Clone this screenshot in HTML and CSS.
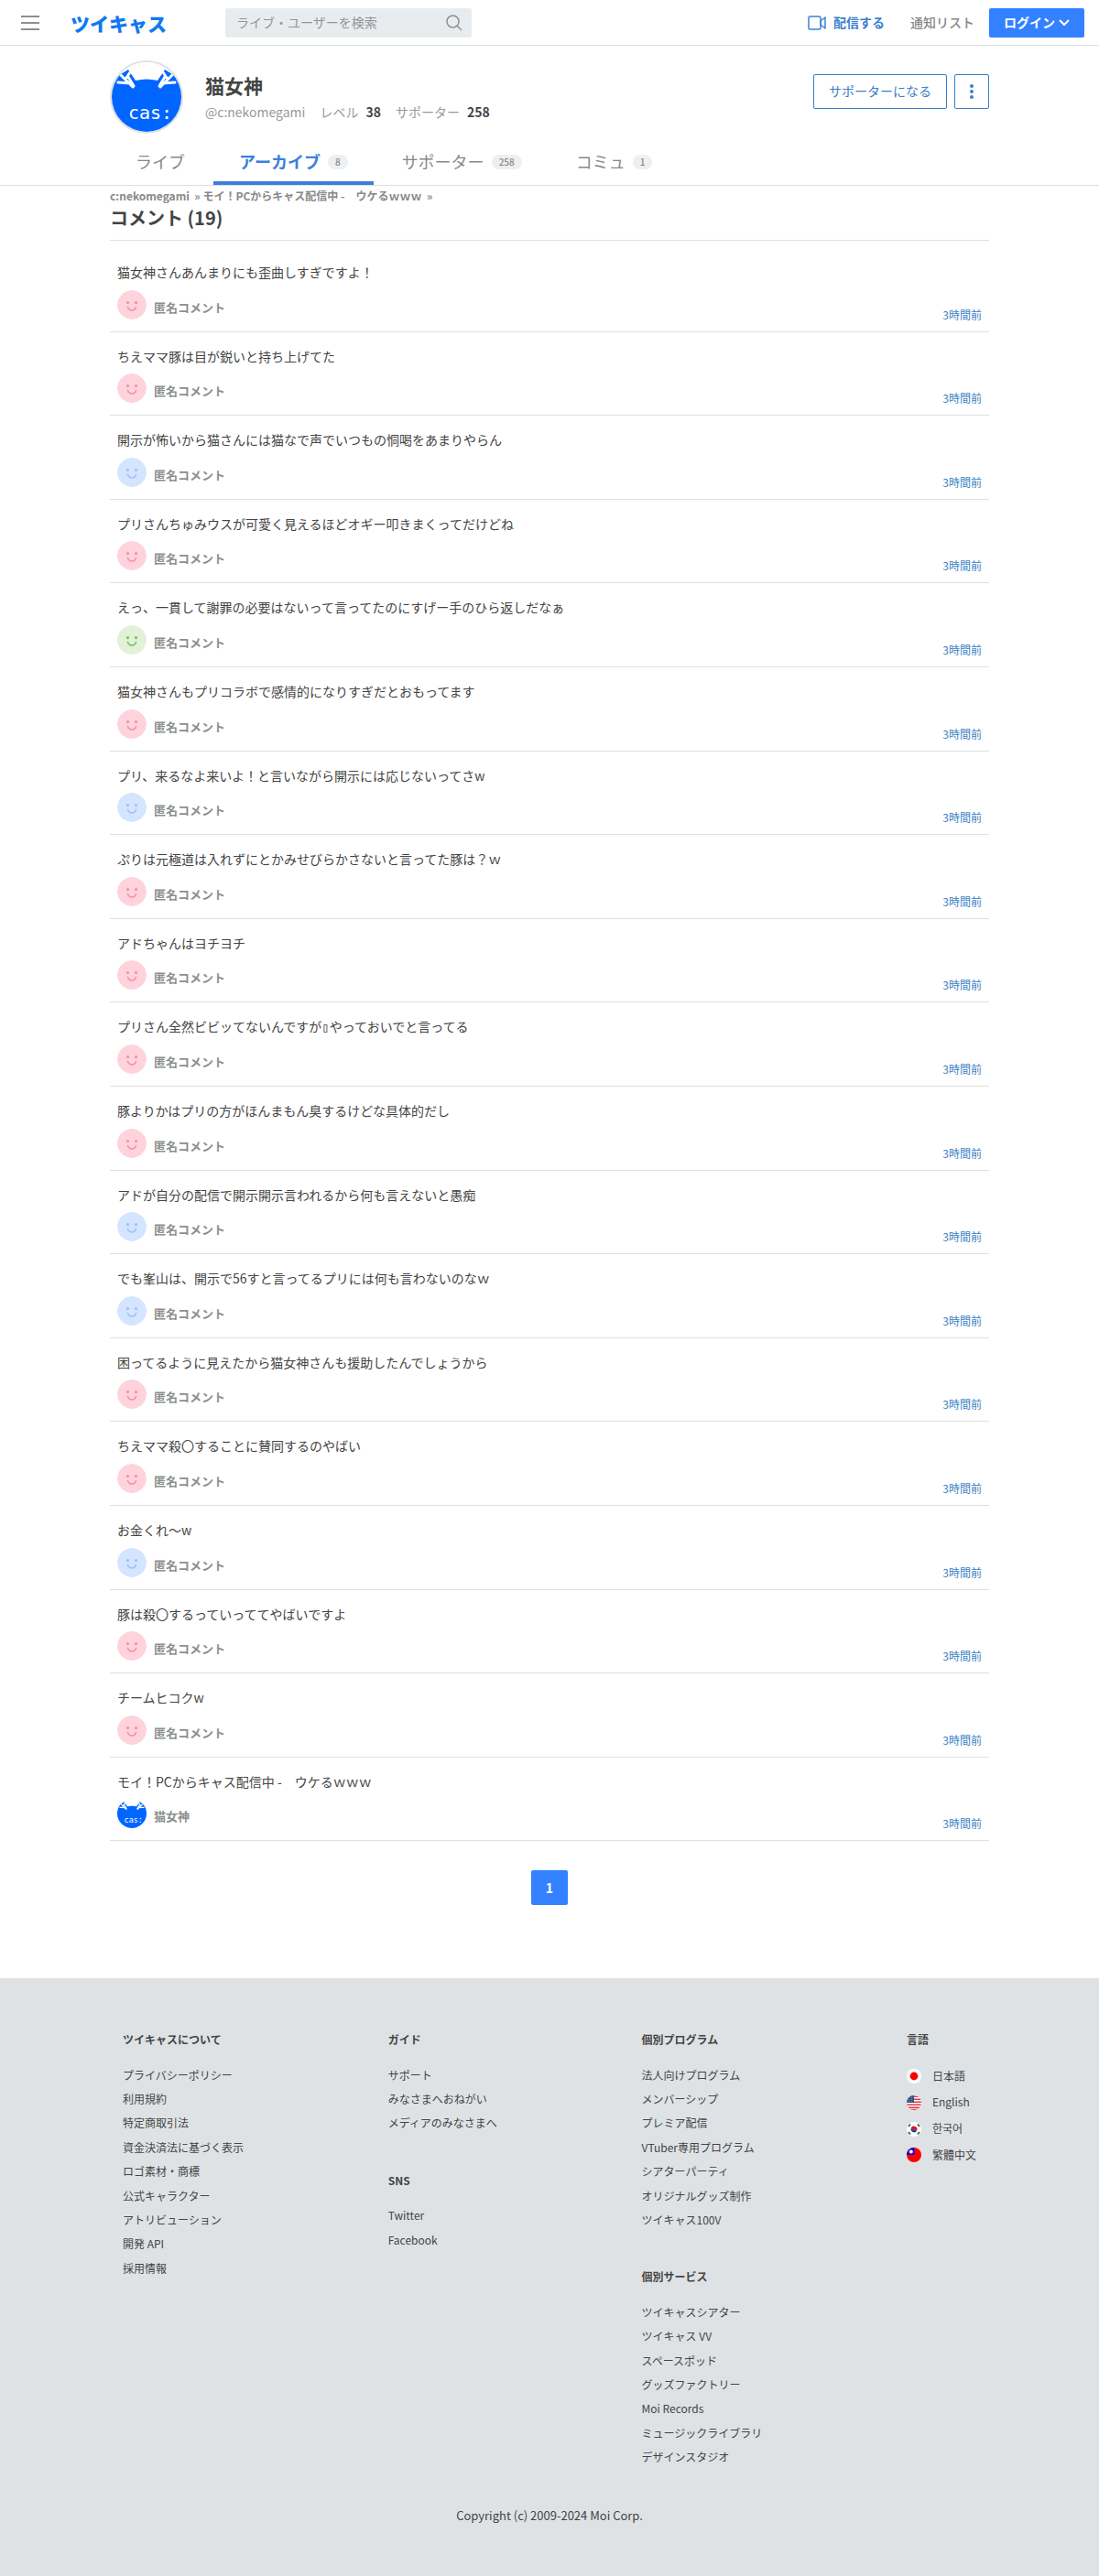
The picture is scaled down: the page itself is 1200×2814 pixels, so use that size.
FILE: index.html
```html
<!DOCTYPE html>
<html lang="ja">
<head>
<meta charset="utf-8">
<meta name="viewport" content="width=device-width, initial-scale=1">
<title>コメント (19) - 猫女神 - ツイキャス</title>
<link rel="stylesheet" href="styles.css">
</head>
<body>
<svg class="defs" aria-hidden="true">
  <symbol id="face" viewBox="0 0 32 32">
    <circle class="face-bg" cx="16" cy="16" r="16"/>
    <circle class="face-eye" cx="11.5" cy="13.6" r="1.6"/>
    <circle class="face-eye" cx="20.5" cy="13.6" r="1.6"/>
    <path class="face-mouth" d="M11.5 18.5c1.6 4.6 7.4 4.6 9 0"/>
  </symbol>
  <symbol id="cat" viewBox="0 0 76 76">
    <rect width="76" height="76" fill="#fff"/>
    <path d="M0 19L18 8l8 12c8-2 16-2 24 0l8-12 18 11v57H0z" fill="#0066ff"/>
    <path d="M7 22l14 1M10 14l13 13M20 11l-4 6M18 16l6 10M69 22l-14 1M66 14L53 27M56 11l4 6M58 16l-6 10" fill="none" stroke="#fff" stroke-width="3" stroke-linecap="round"/>
    <text class="cat-text" x="18" y="62">cas:</text>
  </symbol>
</svg>

<header class="topbar">
  <button class="menu" type="button" aria-label="メニュー">
    <svg width="20" height="16" viewBox="0 0 20 16"><path d="M0 1h20M0 8h20M0 15h20" stroke="#8e9090" stroke-width="2"/></svg>
  </button>
  <a class="logo" href="#">ツイキャス</a>
  <form class="search" role="search">
    <input type="search" aria-label="ライブ・ユーザーを検索" placeholder="ライブ・ユーザーを検索">
    <button type="submit" aria-label="検索">
      <svg width="18" height="18" viewBox="0 0 18 18" fill="none" stroke="#8c9094" stroke-width="1.5"><circle cx="7.5" cy="7.5" r="6.5"/><path d="M12.2 12.2L17 17"/></svg>
    </button>
  </form>
  <nav class="topnav">
    <a class="broadcast" href="#">
      <svg width="20" height="16" viewBox="0 0 20 16" fill="none" stroke="#3b82d8" stroke-width="1.5" stroke-linejoin="round"><rect x="1" y="1" width="13" height="14" rx="1.5"/><path d="M14 6l5-4v12l-5-4z"/></svg>
      配信する
    </a>
    <a class="notices" href="#">通知リスト</a>
    <button class="login" type="button">ログイン
      <svg width="12" height="8" viewBox="0 0 12 8" fill="none" stroke="#fff" stroke-width="2"><path d="M1 1l5 5 5-5"/></svg>
    </button>
  </nav>
</header>

<section class="profile">
  <div class="container">
    <div class="user">
      <a class="avatar" href="#" aria-label="猫女神"><svg><use href="#cat"/></svg></a>
      <div class="user-text">
        <h1>猫女神</h1>
        <p class="meta"><span>@c:nekomegami</span><span>レベル<b>38</b></span><span>サポーター<b>258</b></span></p>
      </div>
      <div class="actions">
        <button class="outline" type="button">サポーターになる</button>
        <button class="outline more" type="button" aria-label="その他">
          <svg width="4" height="16" viewBox="0 0 4 16" fill="#3b7fd0"><circle cx="2" cy="2" r="2"/><circle cx="2" cy="8" r="2"/><circle cx="2" cy="14" r="2"/></svg>
        </button>
      </div>
    </div>
    <nav class="tabs">
      <a href="#">ライブ</a>
      <a class="active" href="#">アーカイブ<span class="badge">8</span></a>
      <a href="#">サポーター<span class="badge">258</span></a>
      <a href="#">コミュ<span class="badge">1</span></a>
    </nav>
  </div>
</section>

<main class="container">
  <p class="crumbs"><a href="#">c:nekomegami</a> &nbsp;» <a href="#">モイ！PCからキャス配信中 -　ウケるｗｗｗ</a> &nbsp;»</p>
  <h2>コメント (19)</h2>
  <ul class="comments">
    <li><p>猫女神さんあんまりにも歪曲しすぎですよ！</p><div class="by"><svg class="pink"><use href="#face"/></svg><span>匿名コメント</span><a href="#">3時間前</a></div></li>
    <li><p>ちえママ豚は目が鋭いと持ち上げてた</p><div class="by"><svg class="pink"><use href="#face"/></svg><span>匿名コメント</span><a href="#">3時間前</a></div></li>
    <li><p>開示が怖いから猫さんには猫なで声でいつもの恫喝をあまりやらん</p><div class="by"><svg class="blue"><use href="#face"/></svg><span>匿名コメント</span><a href="#">3時間前</a></div></li>
    <li><p>プリさんちゅみウスが可愛く見えるほどオギー叩きまくってだけどね</p><div class="by"><svg class="pink"><use href="#face"/></svg><span>匿名コメント</span><a href="#">3時間前</a></div></li>
    <li><p>えっ、一貫して謝罪の必要はないって言ってたのにすげー手のひら返しだなぁ</p><div class="by"><svg class="green"><use href="#face"/></svg><span>匿名コメント</span><a href="#">3時間前</a></div></li>
    <li><p>猫女神さんもプリコラボで感情的になりすぎだとおもってます</p><div class="by"><svg class="pink"><use href="#face"/></svg><span>匿名コメント</span><a href="#">3時間前</a></div></li>
    <li><p>プリ、来るなよ来いよ！と言いながら開示には応じないってさw</p><div class="by"><svg class="blue"><use href="#face"/></svg><span>匿名コメント</span><a href="#">3時間前</a></div></li>
    <li><p>ぷりは元極道は入れずにとかみせびらかさないと言ってた豚は？ｗ</p><div class="by"><svg class="pink"><use href="#face"/></svg><span>匿名コメント</span><a href="#">3時間前</a></div></li>
    <li><p>アドちゃんはヨチヨチ</p><div class="by"><svg class="pink"><use href="#face"/></svg><span>匿名コメント</span><a href="#">3時間前</a></div></li>
    <li><p>プリさん全然ビビッてないんですが<span class="box">▯</span>やっておいでと言ってる</p><div class="by"><svg class="pink"><use href="#face"/></svg><span>匿名コメント</span><a href="#">3時間前</a></div></li>
    <li><p>豚よりかはプリの方がほんまもん臭するけどな具体的だし</p><div class="by"><svg class="pink"><use href="#face"/></svg><span>匿名コメント</span><a href="#">3時間前</a></div></li>
    <li><p>アドが自分の配信で開示開示言われるから何も言えないと愚痴</p><div class="by"><svg class="blue"><use href="#face"/></svg><span>匿名コメント</span><a href="#">3時間前</a></div></li>
    <li><p>でも峯山は、開示で56すと言ってるプリには何も言わないのなｗ</p><div class="by"><svg class="blue"><use href="#face"/></svg><span>匿名コメント</span><a href="#">3時間前</a></div></li>
    <li><p>困ってるように見えたから猫女神さんも援助したんでしょうから</p><div class="by"><svg class="pink"><use href="#face"/></svg><span>匿名コメント</span><a href="#">3時間前</a></div></li>
    <li><p>ちえママ殺〇することに賛同するのやばい</p><div class="by"><svg class="pink"><use href="#face"/></svg><span>匿名コメント</span><a href="#">3時間前</a></div></li>
    <li><p>お金くれ〜w</p><div class="by"><svg class="blue"><use href="#face"/></svg><span>匿名コメント</span><a href="#">3時間前</a></div></li>
    <li><p>豚は殺〇するっていっててやばいですよ</p><div class="by"><svg class="pink"><use href="#face"/></svg><span>匿名コメント</span><a href="#">3時間前</a></div></li>
    <li><p>チームヒコクw</p><div class="by"><svg class="pink"><use href="#face"/></svg><span>匿名コメント</span><a href="#">3時間前</a></div></li>
    <li><p>モイ！PCからキャス配信中 -　ウケるｗｗｗ</p><div class="by"><svg><use href="#cat"/></svg><span>猫女神</span><a href="#">3時間前</a></div></li>
  </ul>
  <nav class="pager" aria-label="ページ"><a href="#" aria-current="page">1</a></nav>
</main>

<footer class="footer">
  <div class="container">
    <div class="columns">
      <div>
        <h3>ツイキャスについて</h3>
        <ul>
          <li><a href="#">プライバシーポリシー</a></li>
          <li><a href="#">利用規約</a></li>
          <li><a href="#">特定商取引法</a></li>
          <li><a href="#">資金決済法に基づく表示</a></li>
          <li><a href="#">ロゴ素材・商標</a></li>
          <li><a href="#">公式キャラクター</a></li>
          <li><a href="#">アトリビューション</a></li>
          <li><a href="#">開発 API</a></li>
          <li><a href="#">採用情報</a></li>
        </ul>
      </div>
      <div>
        <h3>ガイド</h3>
        <ul>
          <li><a href="#">サポート</a></li>
          <li><a href="#">みなさまへおねがい</a></li>
          <li><a href="#">メディアのみなさまへ</a></li>
        </ul>
        <h3>SNS</h3>
        <ul>
          <li><a href="#">Twitter</a></li>
          <li><a href="#">Facebook</a></li>
        </ul>
      </div>
      <div>
        <h3>個別プログラム</h3>
        <ul>
          <li><a href="#">法人向けプログラム</a></li>
          <li><a href="#">メンバーシップ</a></li>
          <li><a href="#">プレミア配信</a></li>
          <li><a href="#">VTuber専用プログラム</a></li>
          <li><a href="#">シアターパーティ</a></li>
          <li><a href="#">オリジナルグッズ制作</a></li>
          <li><a href="#">ツイキャス100V</a></li>
        </ul>
        <h3>個別サービス</h3>
        <ul>
          <li><a href="#">ツイキャスシアター</a></li>
          <li><a href="#">ツイキャス VV</a></li>
          <li><a href="#">スペースポッド</a></li>
          <li><a href="#">グッズファクトリー</a></li>
          <li><a href="#">Moi Records</a></li>
          <li><a href="#">ミュージックライブラリ</a></li>
          <li><a href="#">デザインスタジオ</a></li>
        </ul>
      </div>
      <div>
        <h3>言語</h3>
        <ul class="langs">
          <li><a href="#"><svg class="flag" viewBox="0 0 16 16"><rect width="16" height="16" fill="#fff"/><circle cx="8" cy="8" r="4.4" fill="#f00"/></svg>日本語</a></li>
          <li><a href="#" lang="en"><svg class="flag" viewBox="0 0 16 16"><rect width="16" height="16" fill="#fff"/><path d="M0 1.2h16M0 4.2h16M0 7.2h16M0 10.2h16M0 13.2h16M0 15.6h16" stroke="#e03a4a" stroke-width="1.5"/><rect width="8" height="8" fill="#2f5580"/><path d="M1 2.5h6M1 4.5h6M1 6.5h6" stroke="#7d9aba" stroke-width=".7" stroke-dasharray="1 1"/></svg>English</a></li>
          <li><a href="#" lang="ko"><svg class="flag" viewBox="0 0 16 16"><rect width="16" height="16" fill="#fff"/><path d="M4.8 6.6a3.5 3.5 0 0 1 6.4 2.8C9.5 10 9 7.8 8 8S5.3 9 4.8 6.6z" fill="#e01020"/><path d="M4.8 6.6C5.3 9 7 8.2 8 8s1.5 2 3.2 1.4a3.5 3.5 0 0 1-6.4-2.8z" fill="#14469c"/><path d="M2 5l2-2.5M12 2.5L14 5M2 11l2 2.5M12 13.5l2-2.5" stroke="#555" stroke-width="2"/></svg>한국어</a></li>
          <li><a href="#" lang="zh-Hant"><svg class="flag" viewBox="0 0 16 16"><rect width="16" height="16" fill="#f00"/><rect width="8.5" height="8" fill="#1408c4"/><circle cx="4.8" cy="4.5" r="2" fill="#fff"/></svg>繁體中文</a></li>
        </ul>
      </div>
    </div>
    <p class="copyright">Copyright (c) 2009-2024 Moi Corp.</p>
  </div>
</footer>
</body>
</html>
```
FILE: styles.css
```css
* { box-sizing: border-box; }

body {
  margin: 0;
  background: #fff;
  color: #444;
  font-family: "Noto Sans CJK JP", sans-serif;
  font-size: 14px;
  line-height: 1.4;
}

h1, h2, h3, p, ul { margin: 0; padding: 0; }
ul { list-style: none; }
a { color: inherit; text-decoration: none; }
button, input { font: inherit; padding: 0; border: 0; background: none; }
button { cursor: pointer; }
svg { display: block; flex: none; }

.defs { display: none; }

.container {
  max-width: 960px;
  margin: 0 auto;
}

/* Top bar */
.topbar {
  display: flex;
  align-items: center;
  height: 50px;
  padding: 0 16px 0 23px;
  border-bottom: 1px solid #dde0e0;
}

.logo {
  margin-left: 34px;
  color: #0f78f0;
  font-size: 21px;
  font-weight: 900;
  line-height: 32px;
}

.search {
  display: flex;
  align-items: center;
  width: 269px;
  height: 32px;
  margin-left: 64px;
  padding: 0 10px 0 12px;
  border-radius: 3px;
  background: #e9ecef;
}

.search input {
  flex: 1;
  min-width: 0;
  outline: 0;
  color: #444;
}

.search input::placeholder { color: #909599; opacity: 1; }

.topnav {
  display: flex;
  align-items: center;
  margin-left: auto;
  font-weight: 500;
}

.broadcast {
  display: flex;
  align-items: center;
  gap: 8px;
  color: #3b7fd0;
  font-weight: 700;
}

.notices { margin: 0 16px 0 28px; color: #888; }

.login {
  display: flex;
  align-items: center;
  justify-content: center;
  gap: 4px;
  width: 104px;
  height: 32px;
  border-radius: 2px;
  background: #3381ff;
  color: #fff;
  font-weight: 700;
}

/* Profile */
.profile { border-bottom: 1px solid #dde0e0; }

.user {
  display: flex;
  padding-top: 16px;
}

.avatar {
  width: 80px;
  height: 80px;
  border: 2px solid #dfe3e6;
  border-radius: 50%;
}

.avatar svg { width: 76px; height: 76px; border-radius: 50%; }

.cat-text {
  fill: #fff;
  font-family: "DejaVu Sans Mono", monospace;
  font-size: 20px;
}

.user-text { flex: 1; margin-left: 24px; }

h1 {
  margin-top: 11px;
  font-size: 21px;
  line-height: 32px;
}

.meta {
  display: flex;
  gap: 16px;
  color: #999;
  line-height: 26px;
}

.meta b { margin-left: 8px; color: #444; }

.actions {
  display: flex;
  gap: 8px;
  margin-top: 15px;
}

.outline {
  width: 146px;
  height: 38px;
  border: 1px solid #3b7fc4;
  border-radius: 2px;
  color: #3b7fc4;
}

.more {
  display: flex;
  align-items: center;
  justify-content: center;
  width: 38px;
}

.tabs {
  display: flex;
  gap: 3px;
  margin-top: 8px;
  font-size: 18px;
}

.tabs a {
  display: flex;
  align-items: center;
  height: 48px;
  padding: 2px 28px 0;
  border-bottom: 4px solid transparent;
  color: #888;
}

.tabs .active {
  border-color: #3b80dd;
  color: #3b80dd;
  font-weight: 700;
}

.badge {
  margin-left: 8px;
  padding: 0 8px;
  border-radius: 8px;
  background: #edf0f2;
  color: #888;
  font-size: 10px;
  font-weight: 500;
  line-height: 16px;
}

/* Comments */
.crumbs {
  color: #888;
  font-size: 12px;
  font-weight: 700;
  line-height: 21px;
}

h2 {
  padding-bottom: 10px;
  border-bottom: 1px solid #dde0e0;
  font-size: 20px;
  line-height: 28px;
}

.comments { padding-top: 8px; }

.comments li {
  padding: 17px 8px 13px;
  border-bottom: 1px solid #dde0e0;
}

.box {
  font-family: "DejaVu Sans Mono", monospace;
  line-height: 1;
}

.by {
  display: flex;
  gap: 8px;
  height: 32px;
  margin-top: 9px;
}

.by svg { width: 32px; height: 32px; border-radius: 50%; }

.by span {
  color: #8c8f8f;
  font-size: 13px;
  font-weight: 700;
  line-height: 37px;
}

.by a {
  align-self: flex-end;
  margin-left: auto;
  color: #3b7fc4;
  font-size: 12px;
  line-height: 10px;
}

.pink { --bg: #ffd3dc; --ink: #f48fa8; }
.blue { --bg: #d3e5ff; --ink: #9dc0fa; }
.green { --bg: #e2f1d8; --ink: #72c35c; }
.face-bg { fill: var(--bg); }
.face-eye { fill: var(--ink); }
.face-mouth { fill: none; stroke: var(--ink); stroke-width: 1.5; stroke-linecap: round; }

.pager {
  display: flex;
  justify-content: center;
  padding: 32px 0 80px;
}

.pager a {
  width: 40px;
  border-radius: 2px;
  background: #3381ff;
  color: #fff;
  font-weight: 700;
  line-height: 38px;
  text-align: center;
}

/* Footer */
.footer {
  padding: 54px 0 53px;
  background: #dee2e5;
  font-size: 12px;
  line-height: 2.2;
}

.columns {
  display: flex;
  justify-content: space-between;
  padding: 0 14px;
}

h3 { margin-bottom: 12px; font-size: 12px; }
.columns ul + h3 { margin-top: 36px; }

.langs li { line-height: 2.4; }

.langs a {
  display: flex;
  align-items: center;
  gap: 12px;
}

.flag {
  width: 16px;
  height: 16px;
  border-radius: 50%;
}

.copyright {
  margin-top: 36px;
  font-size: 13px;
  text-align: center;
}
```
